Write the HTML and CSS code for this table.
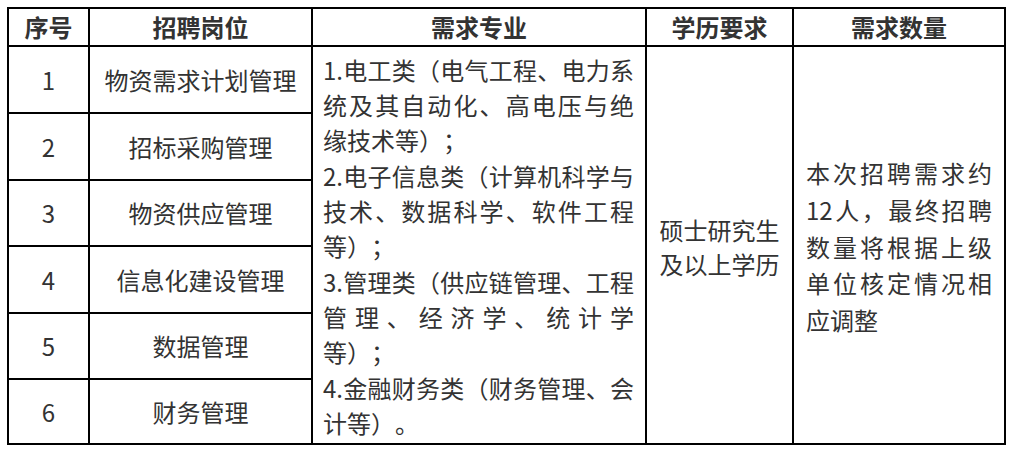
FILE: index.html
```html
<!DOCTYPE html>
<html lang="zh-CN">
<head>
<meta charset="utf-8">
<title>招聘岗位</title>
<link rel="stylesheet" href="styles.css">
</head>
<body>
<table class="jobs">
  <thead>
    <tr class="head">
      <th class="c-no">序号</th>
      <th class="c-post">招聘岗位</th>
      <th class="c-major">需求专业</th>
      <th class="c-edu">学历要求</th>
      <th class="c-num">需求数量</th>
    </tr>
  </thead>
  <tbody>
    <tr class="r67">
      <td class="cell">1</td>
      <td class="cell">物资需求计划管理</td>
      <td class="major" rowspan="6">
        <span class="ln j">1.电工类（电气工程、电力系</span>
        <span class="ln j">统及其自动化、高电压与绝</span>
        <span class="ln">缘技术等）；</span>
        <span class="ln j">2.电子信息类（计算机科学与</span>
        <span class="ln j">技术、数据科学、软件工程</span>
        <span class="ln">等）；</span>
        <span class="ln j">3.管理类（供应链管理、工程</span>
        <span class="ln j">管理、经济学、统计学</span>
        <span class="ln">等）；</span>
        <span class="ln j">4.金融财务类（财务管理、会</span>
        <span class="ln">计等）。</span>
      </td>
      <td class="edu" rowspan="6">硕士研究生<br>及以上学历</td>
      <td class="num" rowspan="6">
        <span class="ln j">本次招聘需求约</span>
        <span class="ln j">12人，最终招聘</span>
        <span class="ln j">数量将根据上级</span>
        <span class="ln j">单位核定情况相</span>
        <span class="ln">应调整</span>
      </td>
    </tr>
    <tr class="r67">
      <td class="cell">2</td>
      <td class="cell">招标采购管理</td>
    </tr>
    <tr class="r66">
      <td class="cell">3</td>
      <td class="cell">物资供应管理</td>
    </tr>
    <tr class="r67">
      <td class="cell">4</td>
      <td class="cell">信息化建设管理</td>
    </tr>
    <tr class="r66">
      <td class="cell">5</td>
      <td class="cell">数据管理</td>
    </tr>
    <tr class="r65">
      <td class="cell">6</td>
      <td class="cell">财务管理</td>
    </tr>
  </tbody>
</table>
</body>
</html>
```

FILE: styles.css
```css
html, body {
  margin: 0;
  padding: 0;
  background: #ffffff;
}

body {
  font-family: "Noto Sans CJK SC", "Noto Sans", sans-serif;
  color: #333333;
}

.jobs {
  margin: 7px 0 0 7px;
  width: 999px;
  table-layout: fixed;
  border-collapse: separate;
  border-spacing: 0;
  border-top: 2px solid #000;
  border-left: 2px solid #000;
  font-size: 24px;
  text-spacing-trim: space-all;
}

.jobs th,
.jobs td {
  box-sizing: border-box;
  border-right: 2px solid #000;
  border-bottom: 2px solid #000;
  padding: 0;
}

.jobs th {
  font-weight: 700;
  text-align: center;
  vertical-align: middle;
  line-height: 30px;
  color: #333333;
}

.c-no { width: 81px; }
.c-post { width: 223px; }
.c-major { width: 334px; }
.c-edu { width: 147px; }
.c-num { width: 212px; }

.head { height: 38px; }
.r67 { height: 67px; }
.r66 { height: 66px; }
.r65 { height: 65px; }

.cell {
  text-align: center;
  vertical-align: middle;
  line-height: 30px;
  white-space: nowrap;
}

.ln {
  display: block;
  white-space: nowrap;
  text-align: left;
}

.ln.j {
  text-align: justify;
  text-align-last: justify;
}

.major {
  vertical-align: middle;
  padding: 2px 11px 0 10px !important;
  line-height: 35.3px;
}

.edu {
  text-align: center;
  vertical-align: middle;
  line-height: 33.4px;
  padding-top: 3px !important;
}

.num {
  vertical-align: middle;
  padding: 4px 12px 0 12px !important;
  line-height: 36.7px;
}
```
